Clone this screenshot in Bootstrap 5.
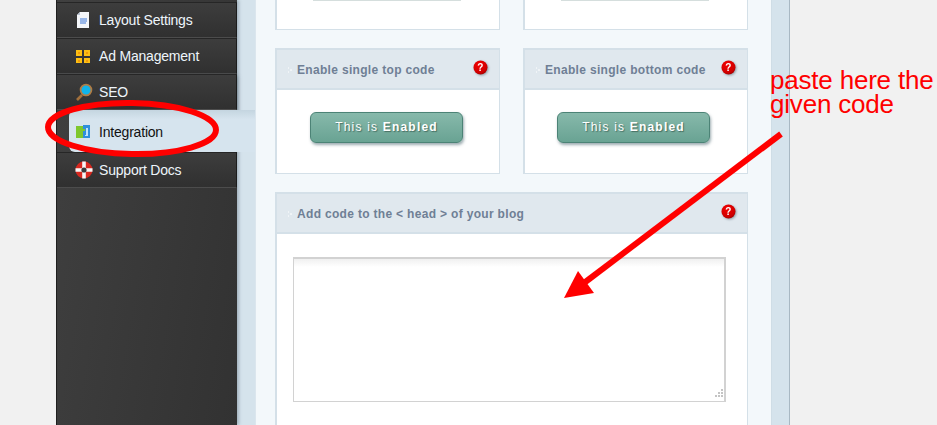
<!DOCTYPE html>
<html lang="en">
<head>
<meta charset="utf-8">
<title>Integration</title>
<link href="https://cdn.jsdelivr.net/npm/bootstrap@5.3.0/dist/css/bootstrap.min.css" rel="stylesheet">
<style>
html,body{height:425px;overflow:hidden}
body{background:#f1f1f1;font-family:"Liberation Sans",Arial,sans-serif;font-size:14px;position:relative}
.shell{margin-left:56px;width:734px;height:425px;overflow:hidden}
.side{width:181px;flex:none;border-left:1px solid #1f1f1f;background:linear-gradient(100deg,#404040,#323232);padding-top:2px;position:relative;z-index:1;box-shadow:2px 0 3px rgba(70,90,105,.35)}
.side-item{height:36px;display:flex;align-items:center;gap:8px;padding-left:18px;color:#eef5fb;border-top:1px solid #262626;border-bottom:1px solid #4c4c4c;background:linear-gradient(180deg,#3d3d3d,#303030);width:180px;letter-spacing:-.2px;text-decoration:none;border-right:1px solid #1c1c1c}
.side-item svg{flex:none;width:16px;height:16px}
.side-item svg.wide{width:18px;height:18px;margin-right:-2px}
.side-item.cur{margin-left:12px;width:186px;height:42px;background:linear-gradient(180deg,#c4d5e0,#d6e4ee 22%);color:#111;border:0;border-radius:6px 0 0 6px;padding-left:6px;padding-top:2px}
.side-item.pre{box-shadow:0 2px 4px rgba(40,60,70,.55)}
.gutter{background:#d5e3ec;padding:0 17px 0 18px;border-right:1px solid #a8b8c3;flex:1;min-width:0}
.panel{background:#f3f8fb;height:425px;padding:0 24px 0 20px;box-shadow:inset 1px 0 0 #dbe6ee,inset -1px 0 0 #cfdde6}
.box-row{display:flex;justify-content:space-between;margin-bottom:18px}
.box{width:225px;border:1px solid #d4e0e8;border-left-width:2px;border-top-width:2px;border-radius:0;background:#fff}
.box-tall{height:126px}
.stub{height:30px;border-top:0;display:block;padding-left:36px}
.stub i{display:block;width:148px;height:1px;background:#d5dedd}
.box-head{height:40px;background:#e0e8ee;border:0;border-bottom:2px solid #d4e0e8;border-radius:0!important;padding:2px 0 0 11px;display:flex;align-items:center;color:#6f7f95;font-weight:700;font-size:12px;letter-spacing:.32px;position:relative;gap:4px}
.box-wide{width:473px;height:260px}
.ask{position:absolute;right:11px;top:10px;width:15px;height:15px;filter:drop-shadow(1px 1px 1px rgba(70,90,100,.5))}
.en-btn{display:block;width:153px;height:31px;margin:22px 0 0 33px;padding:0;background:linear-gradient(180deg,#87b9ab,#69a393);border:1px solid #4c8376;border-radius:6px;box-shadow:1px 2px 3px rgba(60,90,100,.5);color:#fff;font-size:12px;letter-spacing:1.2px;line-height:27px;text-shadow:1px 1px 1px rgba(40,70,60,.6)}
.box+.box .en-btn{margin-left:32px}
.en-btn:hover{background:linear-gradient(180deg,#87b9ab,#69a393);color:#fff}
.box-body{padding:0;position:relative}
.code-area{display:block;width:433px;height:145px;margin:23px 0 0 16px;border:1px solid #d2d2d2;border-right-width:2px;border-top-width:2px;border-radius:0;background:linear-gradient(180deg,#f0f0f0,#fff 8px);box-shadow:none;resize:none}
.grip{position:absolute;left:435px;top:153px;width:12px;height:12px}
.note{position:absolute;left:770px;top:68px;color:#f00;font-size:26px;line-height:24px;letter-spacing:-.2px;white-space:nowrap;z-index:3}
.ink{position:absolute;left:0;top:0;width:937px;height:425px;z-index:2;pointer-events:none}
</style>
</head>
<body>
<svg width="0" height="0" class="d-block position-absolute"><defs>
<radialGradient id="ball" cx=".4" cy=".3" r=".8"><stop offset="0" stop-color="#f40000"/><stop offset=".7" stop-color="#d00000"/><stop offset="1" stop-color="#900000"/></radialGradient>
</defs></svg>
<div class="shell d-flex">
  <nav class="side">
    <a class="side-item" href="#"><svg viewBox="0 0 16 16"><path d="M5 0h9v16H2V3z" fill="#f4f6fa"/><path d="M5 0v3H2z" fill="#b9c3d2"/><path d="M5 7h7M5 9h7M5 11h6" stroke="#3f78d8" stroke-width="1"/></svg>Layout Settings</a>
    <a class="side-item" href="#"><svg viewBox="0 0 16 16"><path d="M1 2h6v6H1zM9 2h6v6H9zM1 10h6v5H1zM9 10h6v5H9z" fill="#fdbf12"/><path d="M3 4h2v2H3zM11 4h2v2h-2zM3 12h2v2H3zM11 12h2v2h-2z" fill="#f29a0c"/></svg>Ad Management</a>
    <a class="side-item pre" href="#"><svg class="wide" viewBox="0 0 18 18"><path d="M2 17l5-5" stroke="#a2703c" stroke-width="2.6"/><circle cx="11" cy="7" r="5.4" fill="#10b4ea" stroke="#b07c44" stroke-width="1.8"/></svg>SEO</a>
    <a class="side-item cur" href="#"><svg viewBox="0 0 16 16"><path d="M1 2h7v12H1z" fill="#7ec72e"/><path d="M8 1h7v13H8z" fill="#2f8fdc"/><path d="M6 5h4v2H8v3H6z" fill="#7ec72e"/><path d="M11 4h2v8h-3v-1h1z" fill="#bfe3fb"/></svg>Integration</a>
    <a class="side-item" href="#"><svg class="wide" viewBox="0 0 18 18"><circle cx="9" cy="9" r="8.5" fill="#d8281f"/><path d="M9 .5v17M.5 9h17" stroke="#f6f6f6" stroke-width="3.6"/><circle cx="9" cy="9" r="2.6" fill="#3a3a3a"/></svg>Support Docs</a>
  </nav>
  <div class="gutter">
    <main class="panel">
      <div class="box-row">
        <div class="box stub"><i></i></div>
        <div class="box stub"><i></i></div>
      </div>
      <div class="box-row">
        <section class="card box box-tall">
          <div class="card-header box-head"><svg width="5" height="7" viewBox="0 0 5 7"><path d="M0 1h1M2 3h1M0 5h1M3 3h1" stroke="#fff"/></svg>Enable single top code<svg class="ask" viewBox="0 0 15 15"><circle cx="7.5" cy="7.5" r="7" fill="url(#ball)"/><text x="7.5" y="11" text-anchor="middle" font-size="10" fill="#fff" font-family="Liberation Sans">?</text></svg></div>
          <div class="card-body box-body"><button class="btn en-btn" type="button">This is <b>Enabled</b></button></div>
        </section>
        <section class="card box box-tall">
          <div class="card-header box-head"><svg width="5" height="7" viewBox="0 0 5 7"><path d="M0 1h1M2 3h1M0 5h1M3 3h1" stroke="#fff"/></svg>Enable single bottom code<svg class="ask" viewBox="0 0 15 15"><circle cx="7.5" cy="7.5" r="7" fill="url(#ball)"/><text x="7.5" y="11" text-anchor="middle" font-size="10" fill="#fff" font-family="Liberation Sans">?</text></svg></div>
          <div class="card-body box-body"><button class="btn en-btn" type="button">This is <b>Enabled</b></button></div>
        </section>
      </div>
      <section class="card box box-wide">
        <div class="card-header box-head"><svg width="5" height="7" viewBox="0 0 5 7"><path d="M0 1h1M2 3h1M0 5h1M3 3h1" stroke="#fff"/></svg>Add code to the &lt; head &gt; of your blog<svg class="ask" viewBox="0 0 15 15"><circle cx="7.5" cy="7.5" r="7" fill="url(#ball)"/><text x="7.5" y="11" text-anchor="middle" font-size="10" fill="#fff" font-family="Liberation Sans">?</text></svg></div>
        <div class="card-body box-body"><textarea class="form-control code-area" aria-label="code"></textarea><svg class="grip" viewBox="0 0 12 12"><path d="M9 2h2v2H9zM9 5h2v2H9zM9 8h2v2H9zM6 5h2v2H6zM6 8h2v2H6zM3 8h2v2H3z" fill="#c4c4c4"/></svg></div>
      </section>
    </main>
  </div>
</div>
<svg class="ink" viewBox="0 0 937 425"><ellipse cx="132" cy="128.5" rx="84" ry="25.5" fill="none" stroke="#f00" stroke-width="6" transform="rotate(1 132 128.5)"/><path d="M781 134L584 283" stroke="#f00" stroke-width="6"/><path d="M564 298L578 271L594 293z" fill="#f00"/></svg>
<div class="note">paste here the<br>given code</div>
<script src="https://cdn.jsdelivr.net/npm/bootstrap@5.3.0/dist/js/bootstrap.bundle.min.js"></script>
</body>
</html>
